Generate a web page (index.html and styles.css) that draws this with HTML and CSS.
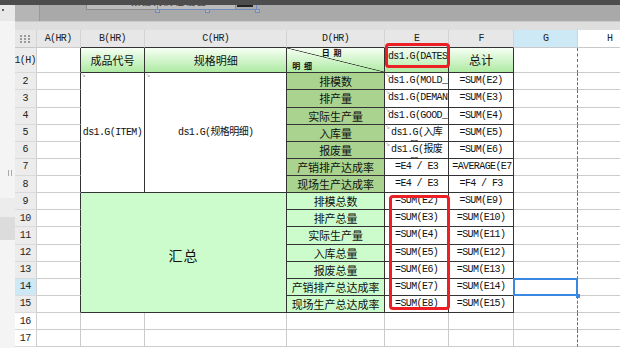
FILE: index.html
```html
<!DOCTYPE html>
<html>
<head>
	<meta charset="utf-8" />
	<title>报表设计 - 排产汇总</title>
	<link rel="stylesheet" href="styles.css">
</head>
<body>
<div class="screen">
	<div class="topbar"></div>
	<div class="work">
		<div class="side">
			<div class="side-top"><span class="side-dot"></span></div>
			<div class="side-grip"></div>
			<div class="side-tab-a"></div>
			<div class="side-tab-b"></div>
		</div>

		<div class="main">
			<div class="dock">
				<div class="dock-left"></div>
				<div class="widget"><span>数据列属性设置</span></div>
				<div class="widget-btn"></div>
				<div class="pick">
					<i class="knob k1"></i><i class="knob k2"></i><i class="knob k3"></i>
				</div>
			</div>
			<div class="strip"></div>

			<div class="sheet">
				<!-- column headers -->
				<div class="hd corner">
					<svg width="10" height="8" viewBox="0 0 10 8">
						<g fill="#9a9a9a">
							<rect x="0" y="0" width="2" height="2"/><rect x="4" y="0" width="2" height="2"/><rect x="8" y="0" width="2" height="2"/>
							<rect x="0" y="3" width="2" height="2"/><rect x="4" y="3" width="2" height="2"/><rect x="8" y="3" width="2" height="2"/>
							<rect x="0" y="6" width="2" height="2"/><rect x="4" y="6" width="2" height="2"/><rect x="8" y="6" width="2" height="2"/>
						</g>
					</svg>
				</div>
				<div class="hd">A(HR)</div>
				<div class="hd top">B(HR)</div>
				<div class="hd top">C(HR)</div>
				<div class="hd top">D(HR)</div>
				<div class="hd top">E</div>
				<div class="hd top">F</div>
				<div class="hd cur">G</div>
				<div class="hd free">H</div>

				<!-- row 1 -->
				<div class="rn">1(H)</div>
				<div class="c edge"></div>
				<div class="c r g cn">成品代号</div>
				<div class="c r g cn">规格明细</div>
				<div class="c r g diag"><span class="d-top">日 期</span><span class="d-bot">明 细</span></div>
				<div class="c r g clip hi">ds1.G(DATES)</div>
				<div class="c r g cn big">总计</div>
				<div class="c brk"></div>
				<div class="c"></div>

				<!-- row 2 -->
				<div class="rn">2</div>
				<div class="c edge"></div>
				<div class="c r x rs7">ds1.G(ITEM)</div>
				<div class="c r x rs7">ds1.G(规格明细)</div>
				<div class="c r dk cn">排模数</div>
				<div class="c r x clip">ds1.G(MOLD_QTY)</div>
				<div class="c r">=SUM(E2)</div>
				<div class="c brk"></div>
				<div class="c"></div>

				<!-- row 3 -->
				<div class="rn">3</div>
				<div class="c edge"></div>
				<div class="c r dk cn">排产量</div>
				<div class="c r x clip">ds1.G(DEMAND_QTY)</div>
				<div class="c r">=SUM(E3)</div>
				<div class="c brk"></div>
				<div class="c"></div>

				<!-- row 4 -->
				<div class="rn">4</div>
				<div class="c edge"></div>
				<div class="c r dk cn">实际生产量</div>
				<div class="c r x clip">ds1.G(GOOD_QTY)</div>
				<div class="c r">=SUM(E4)</div>
				<div class="c brk"></div>
				<div class="c"></div>

				<!-- row 5 -->
				<div class="rn">5</div>
				<div class="c edge"></div>
				<div class="c r dk cn">入库量</div>
				<div class="c r x wrap">ds1.G(入库量)</div>
				<div class="c r">=SUM(E5)</div>
				<div class="c brk"></div>
				<div class="c"></div>

				<!-- row 6 -->
				<div class="rn">6</div>
				<div class="c edge"></div>
				<div class="c r dk cn">报废量</div>
				<div class="c r x wrap">ds1.G(报废量)</div>
				<div class="c r">=SUM(E6)</div>
				<div class="c brk"></div>
				<div class="c"></div>

				<!-- row 7 -->
				<div class="rn">7</div>
				<div class="c edge"></div>
				<div class="c r dk cn">产销排产达成率</div>
				<div class="c r">=E4 / E3</div>
				<div class="c r clip">=AVERAGE(E7)</div>
				<div class="c brk"></div>
				<div class="c"></div>

				<!-- row 8 -->
				<div class="rn">8</div>
				<div class="c edge"></div>
				<div class="c r dk cn">现场生产达成率</div>
				<div class="c r">=E4 / E3</div>
				<div class="c r">=F4 / F3</div>
				<div class="c brk"></div>
				<div class="c"></div>

				<!-- row 9 -->
				<div class="rn">9</div>
				<div class="c edge"></div>
				<div class="c r lt total">汇总</div>
				<div class="c r lt cn">排模总数</div>
				<div class="c r">=SUM(E2)</div>
				<div class="c r">=SUM(E9)</div>
				<div class="c brk"></div>
				<div class="c"></div>

				<!-- row 10 -->
				<div class="rn">10</div>
				<div class="c edge"></div>
				<div class="c r lt cn">排产总量</div>
				<div class="c r">=SUM(E3)</div>
				<div class="c r">=SUM(E10)</div>
				<div class="c brk"></div>
				<div class="c"></div>

				<!-- row 11 -->
				<div class="rn">11</div>
				<div class="c edge"></div>
				<div class="c r lt cn">实际生产量</div>
				<div class="c r">=SUM(E4)</div>
				<div class="c r">=SUM(E11)</div>
				<div class="c brk"></div>
				<div class="c"></div>

				<!-- row 12 -->
				<div class="rn">12</div>
				<div class="c edge"></div>
				<div class="c r lt cn">入库总量</div>
				<div class="c r">=SUM(E5)</div>
				<div class="c r">=SUM(E12)</div>
				<div class="c brk"></div>
				<div class="c"></div>

				<!-- row 13 -->
				<div class="rn">13</div>
				<div class="c edge"></div>
				<div class="c r lt cn">报废总量</div>
				<div class="c r">=SUM(E6)</div>
				<div class="c r">=SUM(E13)</div>
				<div class="c brk"></div>
				<div class="c"></div>

				<!-- row 14 -->
				<div class="rn cur">14</div>
				<div class="c edge"></div>
				<div class="c r lt cn">产销排产总达成率</div>
				<div class="c r">=SUM(E7)</div>
				<div class="c r">=SUM(E14)</div>
				<div class="c brk sel"></div>
				<div class="c"></div>

				<!-- row 15 -->
				<div class="rn">15</div>
				<div class="c edge"></div>
				<div class="c r lt cn">现场生产总达成率</div>
				<div class="c r">=SUM(E8)</div>
				<div class="c r">=SUM(E15)</div>
				<div class="c brk"></div>
				<div class="c"></div>

				<!-- row 16 -->
				<div class="rn free">16</div>
				<div class="c"></div><div class="c"></div><div class="c"></div><div class="c"></div>
				<div class="c"></div><div class="c"></div><div class="c brk"></div><div class="c"></div>

				<!-- row 17 -->
				<div class="rn free">17</div>
				<div class="c"></div><div class="c"></div><div class="c"></div><div class="c"></div>
				<div class="c"></div><div class="c"></div><div class="c brk"></div><div class="c"></div>
			</div>
		</div>
	</div>

	<!-- review marks -->
	<div class="mark mark-date"></div>
	<div class="mark mark-sum"></div>
</div>
</body>
</html>
```

FILE: styles.css
```css
* {
	box-sizing: border-box;
}

body {
	margin: 0;
	background: #fff;
	font-family: "Liberation Mono", "Noto Sans CJK SC", monospace;
	font-size: 10px;
	letter-spacing: -0.6px;
	color: #111;
}

.screen {
	width: 620px;
	height: 348px;
	position: relative;
	overflow: hidden;
}

.topbar {
	height: 5px;
	background: #4d4d4d;
}

.work {
	display: flex;
	height: 343px;
}

/* left dock panel */
.side {
	width: 14.7px;
	flex: none;
	background: #f4f4f4;
	display: flex;
	flex-direction: column;
}

.side-top {
	height: 16px;
	background: #e8e8e8;
}

.side-dot {
	display: block;
	width: 2px;
	height: 2px;
	margin: 4px 0 0 2px;
	background: #666;
}

.side-grip {
	width: 4px;
	height: 6px;
	margin: 149px 0 0 8px;
	border-left: 1px solid #a8a8a8;
	border-right: 1px solid #a8a8a8;
}

.side-tab-a {
	height: 19px;
	margin-top: 22px;
	background: #ececec;
}

.side-tab-b {
	height: 23px;
	background: #dcdcdc;
}

/* main area */
.main {
	flex: 1;
	min-width: 0;
	overflow: hidden;
	display: flex;
	flex-direction: column;
}

.dock {
	height: 16px;
	background: #a9a9a9;
	position: relative;
	display: flex;
}

.dock-left {
	width: 25.3px;
	background: #b5b5b5;
	border-right: 1px solid #999;
}

.widget {
	position: absolute;
	left: 71.3px;
	top: 0;
	width: 150px;
	height: 5px;
	background: #bcbcbc;
	border: 1px solid #8c8c8c;
	border-top: none;
	overflow: hidden;
	font-family: "Noto Sans CJK SC", sans-serif;
	font-size: 9px;
	letter-spacing: 2px;
	color: #333;
}

.widget span {
	display: block;
	margin: -9px 0 0 44px;
	line-height: 12px;
}

.widget-btn {
	position: absolute;
	left: 222.3px;
	top: 0;
	width: 16px;
	height: 2px;
	background: #222;
}

.pick {
	position: absolute;
	left: 142.3px;
	top: 0;
	width: 100px;
	height: 5px;
	border: 1px solid #6c8dbd;
	border-top: none;
}

.knob {
	position: absolute;
	top: 4px;
	width: 5px;
	height: 4px;
	background: #b4b4b4;
	border: 1px solid #6c8dbd;
}

.k1 { left: -3px; }
.k2 { left: 47px; }
.k3 { left: 97px; }

.strip {
	height: 9px;
	background: #dedede;
	border-top: 1px solid #cacaca;
}

/* spreadsheet grid */
.sheet {
	display: grid;
	grid-template-columns: 22px 44px 64.6px 142px 97.7px 64.3px 64.7px 64.3px 64px;
	grid-template-rows: 18px 25.3px repeat(16, 17.14px);
	width: 628px;
}

.hd {
	background: #e7e7e7;
	border-right: 1px solid #d4d4d4;
	border-bottom: 1px solid #c9c9c9;
	display: flex;
	align-items: center;
	justify-content: center;
	color: #222;
}

.hd.top {
	border-bottom-color: #333;
}

.hd.cur {
	background: #cde9f6;
}

.hd.free {
	background: #fff;
}

.rn {
	background: #ececec;
	border-right: 1px solid #cfcfcf;
	border-bottom: 1px solid #dadada;
	display: flex;
	align-items: center;
	justify-content: center;
	color: #222;
}

.rn.cur {
	background: #cde9f6;
}

.rn.free {
	background: #fff;
}

.c {
	position: relative;
	background: #fff;
	border-right: 1px solid #cbcbcb;
	border-bottom: 1px solid #cbcbcb;
	display: flex;
	align-items: center;
	justify-content: center;
	overflow: hidden;
	white-space: nowrap;
	line-height: 14px;
}

.c.edge {
	border-right-color: #333;
}

.c.brk {
	border-right: 1px dashed #6a6a6a;
}

.c.r {
	border-right: 1px solid #333;
	border-bottom: 1px solid #333;
}

.g {
	background: linear-gradient(#f6fff4, #aeeaa3);
}

.dk {
	background: #a9d38f;
}

.lt {
	background: #ccfccc;
}

.cn {
	font-family: "Noto Sans CJK SC", sans-serif;
	font-size: 11px;
	letter-spacing: 0;
}

.big {
	font-size: 12px;
}

.rs7 {
	grid-row: span 7;
}

.total {
	grid-row: span 7;
	grid-column: span 2;
	font-family: "Noto Sans CJK SC", sans-serif;
	font-size: 14px;
	letter-spacing: 1px;
	padding-top: 4px;
}

.clip {
	justify-content: flex-start;
	padding-left: 3px;
}

.hi {
	align-items: flex-start;
	padding-top: 2px;
}

.wrap {
	display: block;
	white-space: normal;
	text-align: center;
	padding: 1px 1px 0;
}

/* expand markers */
.x::before {
	content: "↘";
	position: absolute;
	left: 0;
	top: -2px;
	font-family: "DejaVu Sans", sans-serif;
	font-size: 6px;
	line-height: 8px;
	color: #9a9a9a;
}

/* slash header */
.diag {
	flex-direction: column;
	align-items: stretch;
	justify-content: space-between;
	padding: 0 2px 1px 5px;
	background:
		linear-gradient(to top right, transparent calc(50% - 0.7px), #333 50%, transparent calc(50% + 0.7px)),
		linear-gradient(#f6fff4, #aeeaa3);
	font-family: "Noto Sans CJK SC", sans-serif;
	font-size: 8px;
	font-weight: bold;
	letter-spacing: 1px;
	line-height: 10px;
}

.d-top {
	align-self: center;
	padding-right: 10px;
}

.d-bot {
	align-self: flex-start;
}

/* selected cell */
.sel {
	overflow: visible;
}

.sel::after {
	content: "";
	position: absolute;
	left: -1px;
	top: -1px;
	right: -1px;
	bottom: -1px;
	border: 2px solid #3b88e3;
}

.sel::before {
	content: "";
	position: absolute;
	right: -3px;
	bottom: -3px;
	width: 4px;
	height: 4px;
	background: #3b88e3;
	z-index: 1;
}

/* red review marks */
.mark {
	position: absolute;
	border: 3px solid #ec1f24;
	border-radius: 4px;
}

.mark-date {
	left: 385px;
	top: 43px;
	width: 65px;
	height: 25px;
}

.mark-sum {
	left: 389px;
	top: 195px;
	width: 61px;
	height: 115px;
}
```
